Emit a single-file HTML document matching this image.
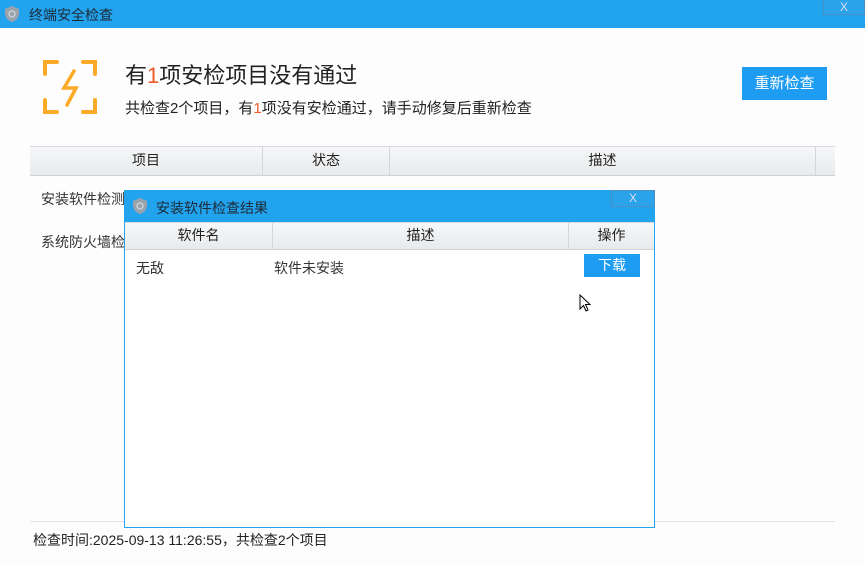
<!DOCTYPE html><html><head><meta charset="utf-8"><style>
body{margin:0;width:865px;height:565px;background:#fdfdfd;position:relative;overflow:hidden;font-family:"Liberation Sans","Noto Sans CJK SC",sans-serif;color:#333}
.a{position:absolute}
.tb{left:0;top:0;width:865px;height:28px;background:#22a3ee}
.hd{background:linear-gradient(#f6f7f8,#e8eaec);border-top:1px solid #d8dadd;border-bottom:1px solid #d0d3d6;font-size:14px;text-align:center;color:#222}
.c{position:absolute;top:0;height:100%;border-right:1px solid #d4d6d9;box-sizing:border-box;line-height:27px}
</style></head><body>
<div class="a tb"></div>
<svg class="a" style="left:4px;top:5px" width="16" height="18" viewBox="0 0 16 18"><path d="M8 1L15 4V9C15 13 11 16 8 17C5 16 1 13 1 9V4Z" fill="#9aa3ad"/><circle cx="8" cy="9" r="3" fill="none" stroke="#c7cdd3" stroke-width="1.6"/></svg>
<div class="a" style="left:29px;top:5px;font-size:14px;color:#1e2a36">终端安全检查</div>
<div class="a" style="left:823px;top:-1px;width:42px;height:16px;border:1px solid #4b8fc4;background:#2aa3ea;color:#dde;font-size:12px;text-align:center;line-height:14px;box-sizing:border-box">X</div>
<svg class="a" style="left:42px;top:59px" width="56" height="56" viewBox="0 0 56 56" fill="none" stroke="#fbaa27" stroke-width="4" stroke-linecap="round"><path d="M3 15V3H15M41 3H53V15M53 41V53H41M15 53H3V41"/><path d="M32 12L22 29H34L25 46" stroke-width="3.5"/></svg>
<div class="a" style="left:125px;top:58px;font-size:22px;color:#222">有<span style="color:#f05a2a">1</span>项安检项目没有通过</div>
<div class="a" style="left:125px;top:97px;font-size:15px;color:#222">共检查2个项目，有<span style="color:#f05a2a">1</span>项没有安检通过，请手动修复后重新检查</div>
<div class="a" style="left:742px;top:67px;width:85px;height:33px;background:#1d9cf2;color:#fff;font-size:15px;text-align:center;line-height:33px">重新检查</div>
<div class="a hd" style="left:30px;top:146px;width:805px;height:28px">
<div class="c" style="left:0;width:233px">项目</div><div class="c" style="left:233px;width:127px">状态</div><div class="c" style="left:360px;width:426px">描述</div></div>
<div class="a" style="left:41px;top:189px;font-size:14px">安装软件检测</div>
<div class="a" style="left:41px;top:232px;font-size:14px">系统防火墙检查</div>
<div class="a" style="left:30px;top:521px;width:805px;height:1px;background:#e2e2e2"></div>
<div class="a" style="left:33px;top:530px;font-size:14px;color:#222">检查时间:2025-09-13 11:26:55，共检查2个项目</div>
<div class="a" style="left:124px;top:190px;width:531px;height:338px;border:1px solid #22a3ee;box-sizing:border-box;background:#fff"></div>
<div class="a" style="left:124px;top:190px;width:531px;height:32px;background:#22a3ee"></div>
<svg class="a" style="left:132px;top:197px" width="16" height="18" viewBox="0 0 16 18"><path d="M8 1L15 4V9C15 13 11 16 8 17C5 16 1 13 1 9V4Z" fill="#9aa3ad"/><circle cx="8" cy="9" r="3" fill="none" stroke="#c7cdd3" stroke-width="1.6"/></svg>
<div class="a" style="left:156px;top:198px;font-size:14px;color:#1e2a36">安装软件检查结果</div>
<div class="a" style="left:611px;top:190px;width:44px;height:17px;border:1px solid #4b8fc4;background:#2aa3ea;color:#dde;font-size:12px;text-align:center;line-height:15px;box-sizing:border-box">X</div>
<div class="a hd" style="left:125px;top:222px;width:529px;height:26px">
<div class="c" style="left:0;width:148px;line-height:25px">软件名</div><div class="c" style="left:148px;width:296px;line-height:25px">描述</div><div class="c" style="left:444px;width:85px;line-height:25px;border:0">操作</div></div>
<div class="a" style="left:136px;top:258px;font-size:14px">无敌</div>
<div class="a" style="left:274px;top:258px;font-size:14px">软件未安装</div>
<div class="a" style="left:584px;top:254px;width:56px;height:23px;background:#1d9cf2;color:#fff;font-size:14px;text-align:center;line-height:23px">下载</div>
<svg class="a" style="left:579px;top:294px" width="12" height="18" viewBox="0 0 12 18"><path d="M1 1V15L4.5 11.5L7 17L9 16L6.5 10.5H11Z" fill="#fff" stroke="#000"/></svg>
</body></html>
